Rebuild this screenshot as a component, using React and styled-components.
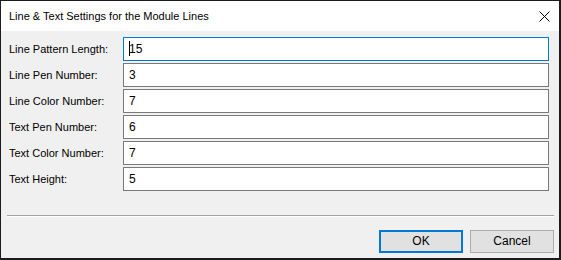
import React from "react";
import styled, { createGlobalStyle } from "styled-components";

const fields = [
  { label: "Line Pattern Length:", value: "15", focused: true },
  { label: "Line Pen Number:", value: "3" },
  { label: "Line Color Number:", value: "7" },
  { label: "Text Pen Number:", value: "6" },
  { label: "Text Color Number:", value: "7" },
  { label: "Text Height:", value: "5" },
];

function App() {
  return (
    <>
      <Global />
      <Window>
        <TitleBar>
          <div className="title">Line &amp; Text Settings for the Module Lines</div>
          <CloseButton>
            <svg width="11" height="11" viewBox="0 0 11 11">
              <path d="M0.5 0.5 L10.5 10.5 M10.5 0.5 L0.5 10.5" stroke="#000" strokeWidth="1" />
            </svg>
          </CloseButton>
        </TitleBar>
        <Body>
          <Form>
            {fields.map((f) => (
              <Row key={f.label}>
                <Label>{f.label}</Label>
                <Field focused={f.focused}>
                  {f.focused && <Caret />}
                  {f.value}
                </Field>
              </Row>
            ))}
          </Form>
          <Separator />
          <Buttons>
            <Button primary>OK</Button>
            <Button>Cancel</Button>
          </Buttons>
        </Body>
      </Window>
    </>
  );
}

export default App;

const Global = createGlobalStyle`
  html, body {
    margin: 0;
    padding: 0;
    background: #1c1c1c;
  }
  #root {
    padding: 1px 0 0 1px;
  }
`;

const Window = styled.div`
  width: 558px;
  height: 257px;
  display: flex;
  flex-direction: column;
  background: #f0f0f0;
  font-family: "Liberation Sans", Arial, sans-serif;
  font-size: 11px;
  color: #000;
`;

const TitleBar = styled.div`
  height: 30px;
  background: #fff;
  display: flex;
  align-items: center;
  justify-content: space-between;
  padding-left: 8px;
  .title {
    font-size: 11px;
    padding-bottom: 1px;
  }
`;

const CloseButton = styled.div`
  width: 30px;
  height: 30px;
  display: flex;
  align-items: center;
  justify-content: center;
  svg {
    display: block;
  }
`;

const Body = styled.div`
  flex: 1;
  display: flex;
  flex-direction: column;
  padding: 6px 5px 5px 6px;
`;

const Form = styled.div`
  display: flex;
  flex-direction: column;
  gap: 2px;
  padding-right: 5px;
`;

const Row = styled.div`
  display: flex;
  align-items: center;
`;

const Label = styled.div`
  width: 116px;
  flex-shrink: 0;
  box-sizing: border-box;
  padding-left: 2px;
  white-space: nowrap;
`;

const Field = styled.div`
  flex: 1;
  height: 24px;
  box-sizing: border-box;
  background: #fff;
  border: 1px solid ${(p) => (p.focused ? "#0078d7" : "#7a7a7a")};
  display: flex;
  align-items: center;
  padding-left: 5px;
  padding-bottom: 1px;
  font-size: 12px;
`;

const Caret = styled.span`
  display: inline-block;
  width: 1px;
  height: 15px;
  background: #000;
  margin-right: -1px;
`;

const Separator = styled.div`
  margin-top: 24px;
  height: 1px;
  background: #a0a0a0;
  border-bottom: 1px solid #fff;
`;

const Buttons = styled.div`
  display: flex;
  justify-content: flex-end;
  gap: 7px;
  margin-top: 13px;
`;

const Button = styled.div`
  width: 84px;
  height: 23px;
  box-sizing: border-box;
  background: #e1e1e1;
  border: ${(p) => (p.primary ? "2px solid #0078d7" : "1px solid #adadad")};
  display: flex;
  align-items: center;
  justify-content: center;
  padding-bottom: 1px;
  font-size: 12px;
`;
